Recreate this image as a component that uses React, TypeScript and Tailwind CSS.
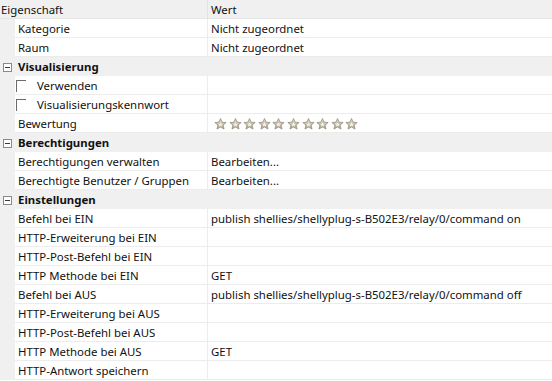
import React from "react";

type Row =
  | { kind: "item"; label: string; value?: string; check?: boolean; stars?: boolean }
  | { kind: "group"; label: string };

const rows: Row[] = [
  { kind: "item", label: "Kategorie", value: "Nicht zugeordnet" },
  { kind: "item", label: "Raum", value: "Nicht zugeordnet" },
  { kind: "group", label: "Visualisierung" },
  { kind: "item", label: "Verwenden", check: true },
  { kind: "item", label: "Visualisierungskennwort", check: true },
  { kind: "item", label: "Bewertung", stars: true },
  { kind: "group", label: "Berechtigungen" },
  { kind: "item", label: "Berechtigungen verwalten", value: "Bearbeiten..." },
  { kind: "item", label: "Berechtigte Benutzer / Gruppen", value: "Bearbeiten..." },
  { kind: "group", label: "Einstellungen" },
  { kind: "item", label: "Befehl bei EIN", value: "publish shellies/shellyplug-s-B502E3/relay/0/command on" },
  { kind: "item", label: "HTTP-Erweiterung bei EIN" },
  { kind: "item", label: "HTTP-Post-Befehl bei EIN" },
  { kind: "item", label: "HTTP Methode bei EIN", value: "GET" },
  { kind: "item", label: "Befehl bei AUS", value: "publish shellies/shellyplug-s-B502E3/relay/0/command off" },
  { kind: "item", label: "HTTP-Erweiterung bei AUS" },
  { kind: "item", label: "HTTP-Post-Befehl bei AUS" },
  { kind: "item", label: "HTTP Methode bei AUS", value: "GET" },
  { kind: "item", label: "HTTP-Antwort speichern" },
];

function Star() {
  return (
    <svg width="13" height="12" viewBox="0 0 24 23">
      <defs>
        <linearGradient id="sg" x1="0" y1="0" x2="0" y2="1">
          <stop offset="0" stopColor="#e2ddcf" />
          <stop offset="1" stopColor="#ada58e" />
        </linearGradient>
      </defs>
      <path
        d="M12 1l3.2 7 7.6.7-5.8 5 1.8 7.5L12 17.3 5.2 21.2 7 13.7l-5.8-5 7.6-.7z"
        fill="url(#sg)"
        stroke="#8f8872"
        strokeWidth="1.4"
        strokeLinejoin="round"
      />
      <path d="M12 8l1.3 3 3.3.3-2.5 2.2.8 3.2L12 15l-2.9 1.7.8-3.2-2.5-2.2 3.3-.3z" fill="#f3f1ea" />
    </svg>
  );
}

function Expander() {
  return (
    <span className="flex h-[9px] w-[9px] items-center justify-center border border-[#8a8a8a] bg-white">
      <span className="h-px w-[5px] bg-[#3a3a3a]" />
    </span>
  );
}

export default function App() {
  return (
    <div
      className="h-[381px] w-[552px] overflow-hidden bg-white text-[11.4px] leading-none text-[#111]"
      style={{ fontFamily: '"Noto Sans", "Open Sans", sans-serif' }}
    >
      <div className="flex h-[19px] items-center border-b border-[#e5e5e5] bg-[#f0f0f0] pt-[1px]">
        <div className="w-[207px] pl-[1px]">Eigenschaft</div>
        <div className="h-[19px] w-px bg-[#e2e2e2]" />
        <div className="pl-[3px]">Wert</div>
      </div>
      {rows.map((r, i) =>
        r.kind === "group" ? (
          <div key={i} className="flex h-[19px] items-center bg-[#f0f0f0] pt-[1px]">
            <div className="flex w-[18px] justify-center pr-[3px]">
              <Expander />
            </div>
            <span className="font-bold">{r.label}</span>
          </div>
        ) : (
          <div key={i} className="flex h-[19px]">
            <div className="w-[15px] bg-[#f0f0f0]" />
            <div className="flex w-[193px] items-center border-b border-r border-[#ececec] pl-[3px] pt-[1px]">
              {r.check && (
                <span className="mr-[11px] ml-[-2px] h-[12px] w-[10px] border-l border-t border-[#6a6a6a]" />
              )}
              <span>{r.label}</span>
            </div>
            <div className="flex flex-1 items-center border-b border-[#ececec] pl-[3px] pt-[1px]">
              {r.value && <span>{r.value}</span>}
              {r.stars && (
                <div className="flex gap-[1.6px] pl-[3px]">
                  {Array.from({ length: 10 }).map((_, k) => (
                    <Star key={k} />
                  ))}
                </div>
              )}
            </div>
          </div>
        ),
      )}
    </div>
  );
}
